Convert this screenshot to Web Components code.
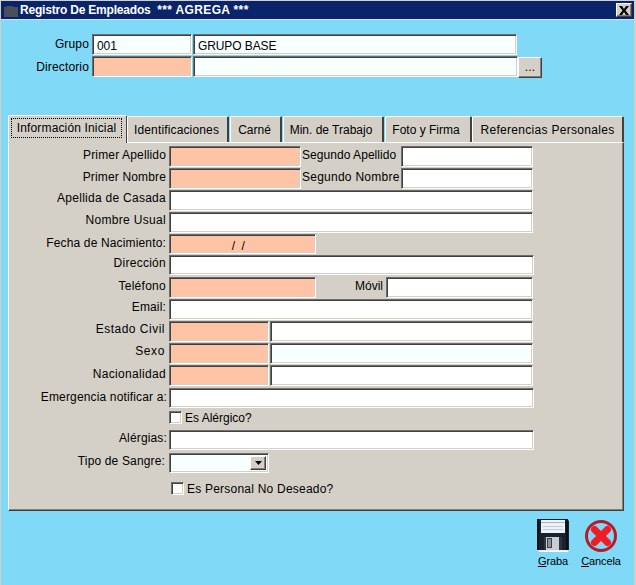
<!DOCTYPE html>
<html><head><meta charset="utf-8"><style>
html,body{margin:0;padding:0}
body{font:12px "Liberation Sans",Arial,sans-serif;color:#000;width:636px;height:585px;overflow:hidden;letter-spacing:.15px}
</style></head><body>
<x-window>
  <x-titlebar slot="title"><span style="letter-spacing:-.2px">Registro De Empleados</span>&nbsp; <span style="letter-spacing:.35px">*** AGREGA ***</span></x-titlebar>
  <x-group>
    <x-row h="21" g="0"><x-label w="91" pad="3" pb="1">Grupo</x-label><x-field w="100" tone="azure">001</x-field><x-field w="324" ml="1" tone="azure">GRUPO BASE</x-field></x-row>
    <x-row h="21" g="1"><x-label w="91" pad="3" pb="0">Directorio</x-label><x-field w="100" tone="peach"></x-field><x-field w="325" ml="1" tone="azure"></x-field><x-dots>...</x-dots></x-row>
  </x-group>
  <x-tabs>
    <x-tab slot="tabs" w="119" pr="2" active>Información Inicial</x-tab>
    <x-tab slot="tabs" w="102" pr="2">Identificaciones</x-tab>
    <x-tab slot="tabs" w="52" ml="1" ls="0" pr="2">Carné</x-tab>
    <x-tab slot="tabs" w="101" ml="1" ls="0" pr="4">Min. de Trabajo</x-tab>
    <x-tab slot="tabs" w="87" ml="1" ls="0" pr="4">Foto y Firma</x-tab>
    <x-tab slot="tabs" w="152" ls=".3">Referencias Personales</x-tab>

    <x-row h="21" g="0"><x-label w="160" pad="3">Primer Apellido</x-label><x-field w="132" tone="peach"></x-field><x-label w="100" align="left" pl="1" ls=".05">Segundo Apellido</x-label><x-field w="132"></x-field></x-row>
    <x-row h="21" g="1"><x-label w="160" pad="3">Primer Nombre</x-label><x-field w="132" tone="peach"></x-field><x-label w="100" align="left" pl="1" ls=".25">Segundo Nombre</x-label><x-field w="132"></x-field></x-row>
    <x-row h="21" g="1"><x-label w="160" pad="3" pb="5" ls=".27">Apellida de Casada</x-label><x-field w="364"></x-field></x-row>
    <x-row h="21" g="1"><x-label w="160" pad="3" pb="5" ls=".32">Nombre Usual</x-label><x-field w="364"></x-field></x-row>
    <x-row h="20" g="1"><x-label w="160" pad="3">Fecha de Nacimiento:</x-label><x-field w="147" tone="peach" center>/ /</x-field></x-row>
    <x-row h="20" g="1"><x-label w="160" pad="3" pb="5" ls=".27">Dirección</x-label><x-field w="365"></x-field></x-row>
    <x-row h="21" g="2"><x-label w="160" pad="3" ls=".27">Teléfono</x-label><x-field w="147" tone="peach"></x-field><x-label w="70" pad="3" ls="0">Móvil</x-label><x-field w="147"></x-field></x-row>
    <x-row h="21" g="1"><x-label w="160" pad="3" pb="5">Email:</x-label><x-field w="364"></x-field></x-row>
    <x-row h="21" g="1"><x-label w="160" pad="4" pb="5" ls=".5">Estado Civil</x-label><x-field w="100" tone="peach"></x-field><x-field w="263" ml="1"></x-field></x-row>
    <x-row h="21" g="1"><x-label w="160" pad="4" pb="5" ls=".6">Sexo</x-label><x-field w="100" tone="peach"></x-field><x-field w="263" ml="1" tone="azure"></x-field></x-row>
    <x-row h="21" g="1"><x-label w="160" pad="3" ls=".32">Nacionalidad</x-label><x-field w="100" tone="peach"></x-field><x-field w="263" ml="1"></x-field></x-row>
    <x-row h="20" g="2"><x-label w="160" pad="2">Emergencia notificar a:</x-label><x-field w="365"></x-field></x-row>
    <x-row h="13" g="3"><x-label w="160"></x-label><x-check>Es Alérgico?</x-check></x-row>
    <x-row h="20" g="6"><x-label w="160" pad="2" pb="5">Alérgias:</x-label><x-field w="365"></x-field></x-row>
    <x-row h="20" g="3"><x-label w="160" pad="4" pb="5">Tipo de Sangre:</x-label><x-select w="100"></x-select></x-row>
    <x-row h="13" g="9"><x-label w="162"></x-label><x-check ls=".22">Es Personal No Deseado?</x-check></x-row>
  </x-tabs>
  <x-actions>
    <x-action key="G" rest="raba" icon="save"></x-action>
    <x-action key="C" rest="ancela" icon="cancel"></x-action>
  </x-actions>
</x-window>
<script>
function def(name, css, html, init){
  customElements.define(name, class extends HTMLElement{
    constructor(){super();const s=this.attachShadow({mode:'open'});s.innerHTML='<style>'+css+'</style>'+html;}
    connectedCallback(){ if(init) init(this); }
  });
}
const sunk='box-sizing:border-box;border:1px solid;border-color:#6e6e6e #fff #fff #6e6e6e;box-shadow:inset 1px 1px 0 #404040,inset -1px -1px 0 #d4d0c8;';
def('x-window',`:host{display:block;box-sizing:border-box;width:636px;height:585px;background:#81d9f8;border-left:1px solid #d4d0c8;border-top:1px solid #d4d0c8;border-right:2px solid #d4d0c8}`,`<slot name="title"></slot><slot></slot>`);
def('x-titlebar',`:host{display:flex;align-items:center;height:18px;background:#0a246a;color:#fff;font-weight:bold;font-size:12px;letter-spacing:.05px;border-bottom:1px solid #d4e4ee;white-space:pre}
 svg{margin:1px 1px 0 2px;flex:none}.t{flex:1}
 .x{flex:none;box-sizing:border-box;width:16px;height:14px;margin-right:2px;background:#d4d0c8;border:1px solid;border-color:#fff #404040 #404040 #fff;box-shadow:inset -1px -1px 0 #808080;display:flex;align-items:center;justify-content:center}`,
 `<svg width="16" height="14" viewBox="0 0 16 14"><path d="M1 3h2l1-1h5l1 1h5v10H1z" fill="#4a4f5a"/></svg><span class="t"><slot></slot></span><span class="x"><svg style="margin:0" width="10" height="9" viewBox="0 0 10 9"><path d="M0 0h3l2 3 2-3h3L6.500 4.500 10 9H7L5 6 3 9H0l3.500-4.500z" fill="#000"/></svg></span>`);
def('x-group',`:host{display:block;padding-top:14px}`,`<slot></slot>`);
def('x-row',`:host{display:flex;align-items:stretch}`,`<slot></slot>`,el=>{el.style.height=el.getAttribute('h')+'px';el.style.marginTop=(el.getAttribute('g')||0)+'px';});
def('x-label',`:host{display:flex;align-items:center;box-sizing:border-box;flex:none;white-space:nowrap;height:100%;padding-bottom:3px}`,`<slot></slot>`,el=>{
  el.style.width=el.getAttribute('w')+'px';
  const left=el.getAttribute('align')==='left';
  el.style.justifyContent=left?'flex-start':'flex-end';
  if(el.getAttribute('pad'))el.style.paddingRight=el.getAttribute('pad')+'px';
  if(el.getAttribute('pl'))el.style.paddingLeft=el.getAttribute('pl')+'px';
  if(el.getAttribute('pb'))el.style.paddingBottom=el.getAttribute('pb')+'px';
  if(el.getAttribute('ls'))el.style.letterSpacing=el.getAttribute('ls')+'px';
});
def('x-field',`:host{display:flex;align-items:center;flex:none;${sunk}background:#fff;padding:3px 0 0 4px;white-space:nowrap;overflow:hidden;letter-spacing:-.1px}`,`<slot></slot>`,el=>{
  el.style.width=el.getAttribute('w')+'px';
  if(el.getAttribute('ml'))el.style.marginLeft=el.getAttribute('ml')+'px';
  const t=el.getAttribute('tone');
  el.style.background=t==='peach'?'#ffc4a6':t==='azure'?'#f7ffff':'#fff';
  if(el.hasAttribute('center')){el.style.justifyContent='center';el.style.letterSpacing='1.5px';el.style.padding='3px 7px 0 0';}
});
def('x-dots',`:host{display:flex;align-items:center;justify-content:center;flex:none;box-sizing:border-box;width:24px;height:21px;margin-top:1px;background:#d4d0c8;border:1px solid;border-color:#fff #404040 #404040 #fff;box-shadow:inset -1px -1px 0 #808080;padding-bottom:1px}`,`<slot></slot>`);
def('x-tabs',`:host{display:block;margin:38px 0 0 7px;width:616px}
 .strip{display:flex;height:28px;position:relative;z-index:1;margin-bottom:-1px;align-items:flex-end}
 .panel{box-sizing:border-box;height:369px;background:#d4d0c8;border:1px solid;border-color:#fff #404040 #404040 #fff;box-shadow:inset -1px -1px 0 #808080;padding-top:3px}`,
 `<div class="strip"><slot name="tabs"></slot></div><div class="panel"><slot></slot></div>`);
def('x-tab',`:host{display:flex;align-items:center;justify-content:center;box-sizing:border-box;flex:none;height:26px;background:#d4d0c8;border-top:1px solid #fff;border-left:1px solid #fff;border-right:2px solid #404040;border-radius:2px 2px 0 0;margin-bottom:1px;white-space:nowrap;padding-top:1px}
 :host([active]){height:28px;margin-bottom:0;border-right:1px solid #404040;padding-top:0;padding-bottom:4px}
 :host([active]) .f{outline:1px dotted #000;outline-offset:0;padding:2px 5px;}
 .f{display:block}`,`<span class="f"><slot></slot></span>`,el=>{
  el.style.width=el.getAttribute('w')+'px';
  if(el.getAttribute('ml'))el.style.marginLeft=el.getAttribute('ml')+'px';
  if(el.getAttribute('ls'))el.style.letterSpacing=el.getAttribute('ls')+'px';
  if(el.getAttribute('pr'))el.style.paddingRight=el.getAttribute('pr')+'px';
});
def('x-check',`:host{display:flex;align-items:center;gap:3px;white-space:nowrap;letter-spacing:0}
 .b{box-sizing:border-box;width:13px;height:13px;background:#fff;border:1px solid;border-color:#6e6e6e #fff #fff #6e6e6e;box-shadow:inset 1px 1px 0 #404040,inset -1px -1px 0 #d4d0c8;flex:none}`,`<span class="b"></span><slot></slot>`,el=>{if(el.getAttribute('ls'))el.style.letterSpacing=el.getAttribute('ls')+'px';});
def('x-select',`:host{display:flex;flex:none;${sunk}background:#f7ffff;justify-content:flex-end;padding:2px}
 .a{box-sizing:border-box;width:16px;height:100%;background:#d4d0c8;border:1px solid;border-color:#fff #404040 #404040 #fff;box-shadow:inset -1px -1px 0 #808080;display:flex;align-items:center;justify-content:center}`,
 `<span class="a"><svg width="7" height="4" viewBox="0 0 7 4"><path d="M0 0h7L3.500 4z" fill="#000"/></svg></span>`,el=>{el.style.width=el.getAttribute('w')+'px';});
def('x-actions',`:host{display:flex;justify-content:flex-end;padding:8px 9px 0 0}`,`<slot></slot>`);
const icons={
 save:`<svg width="34" height="34" viewBox="0 0 34 34">
  <path d="M1 0H31L33 2V32H1z" fill="#1a2230"/>
  <path d="M1 0H3V32H1zM30 0H32V32H30z" fill="#0c1018"/>
  <path d="M5 1H29V14H5z" fill="#eef1f6"/>
  <path d="M5 3H29V4H5z" fill="#a9b4cc"/><path d="M7 7H27V8H7zM7 10H27V11H7z" fill="#c3cad9"/>
  <path d="M8 18H26V32H8z" fill="#2c3442"/>
  <path d="M10 18H23V31H10z" fill="#c9ced6"/>
  <path d="M11 19H16V29H11z" fill="#3a3e48"/><path d="M12 20H15V28H12z" fill="#8d929c"/>
  <path d="M1 31H33V32H1z" fill="#e9edf1"/><path d="M3 32H32V33H3z" fill="#fff"/>
 </svg>`,
 cancel:`<svg width="34" height="34" viewBox="0 0 34 34">
  <circle cx="17" cy="17" r="14.500" fill="none" stroke="#b51c28" stroke-width="3"/>
  <path d="M10.500 10.500L23.500 23.500M23.500 10.500L10.500 23.500" stroke="#f01c26" stroke-width="7" stroke-linecap="round"/>
 </svg>`};
customElements.define('x-action',class extends HTMLElement{
 constructor(){super();this.attachShadow({mode:'open'});}
 connectedCallback(){
  this.shadowRoot.innerHTML=`<style>:host{display:flex;flex-direction:column;align-items:center;width:48px;letter-spacing:0}svg{display:block}.l{margin-top:1px;line-height:15px;font-size:11px;letter-spacing:-.1px}u{text-underline-offset:1px}</style>${icons[this.getAttribute('icon')]}<span class="l"><u>${this.getAttribute('key')}</u>${this.getAttribute('rest')}</span>`;
 }
});
</script>
</body></html>
